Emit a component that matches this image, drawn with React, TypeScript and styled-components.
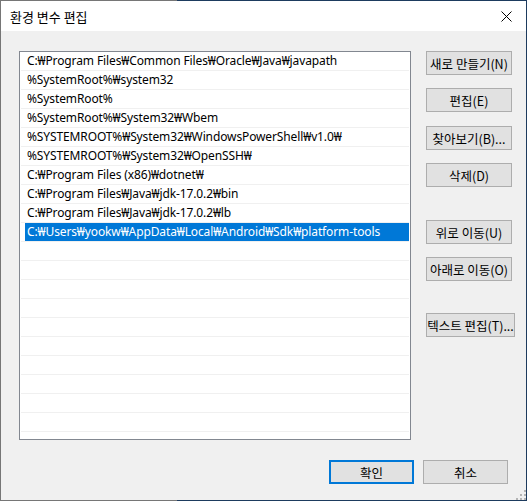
import styled, { createGlobalStyle } from 'styled-components';

const GlobalStyle = createGlobalStyle`
  html, body {
    margin: 0;
    padding: 0;
    background: #f0f0f0;
  }
  body {
    font-family: "Noto Sans CJK KR", sans-serif;
    font-size: 12px;
    color: #000;
  }
`;

const Frame = styled.div`
  position: relative;
  width: 527px;
  height: 501px;
  box-sizing: border-box;
  padding: 1px;
  background: linear-gradient(to right, #767676 177px, #1d3b5e 177px);
  display: flex;
  flex-direction: column;
`;

const TitleBar = styled.div`
  height: 30px;
  flex: none;
  background: #fff;
  display: flex;
  align-items: center;
  justify-content: space-between;
  padding: 0 14px 0 9px;
`;

const Title = styled.span`
  font-size: 13px;
  line-height: 1;
  margin-top: 1px;
`;

const Body = styled.div`
  position: relative;
  flex: 1;
  background: #f0f0f0;
  padding: 20px 0 0 18px;
  display: flex;
  flex-direction: column;
`;

const Main = styled.div`
  display: flex;
  gap: 15px;
  align-items: flex-start;
`;

const List = styled.div`
  width: 392px;
  height: 389px;
  box-sizing: border-box;
  border: 1px solid #828790;
  background: #fff;
  overflow: hidden;
`;

const Row = styled.div`
  height: 18px;
  margin: 0 1px;
  padding-left: 4px;
  border-bottom: 1px solid #f0f0f0;
  display: flex;
`;

const Item = styled.div<{ $selected?: boolean }>`
  flex: 1;
  padding-left: 2px;
  font-family: "Noto Sans", "Noto Sans CJK KR", sans-serif;
  font-size: 12px;
  letter-spacing: -0.12px;
  line-height: 18px;
  white-space: nowrap;
  background: ${(p) => (p.$selected ? '#0078d7' : 'transparent')};
  color: ${(p) => (p.$selected ? '#fff' : '#000')};
`;

const Side = styled.div`
  display: flex;
  flex-direction: column;
  align-items: flex-start;
`;

const Button = styled.button<{ $width?: number; $top?: number; $default?: boolean }>`
  width: ${(p) => p.$width ?? 86}px;
  height: 24px;
  margin-top: ${(p) => p.$top ?? 0}px;
  box-sizing: border-box;
  padding: 0;
  border: ${(p) => (p.$default ? '2px solid #0078d7' : '1px solid #adadad')};
  background: #e1e1e1;
  font-family: "Noto Sans CJK KR", sans-serif;
  font-size: 12.5px;
  color: #000;
  white-space: nowrap;
  display: flex;
  align-items: center;
  justify-content: center;
`;

const Footer = styled.div`
  display: flex;
  justify-content: flex-end;
  gap: 9px;
  margin-top: 20px;
  padding-right: 18px;
`;

const Grip = styled.svg`
  position: absolute;
  right: 0;
  bottom: 0;
`;

const paths = [
  'C:₩Program Files₩Common Files₩Oracle₩Java₩javapath',
  '%SystemRoot%₩system32',
  '%SystemRoot%',
  '%SystemRoot%₩System32₩Wbem',
  '%SYSTEMROOT%₩System32₩WindowsPowerShell₩v1.0₩',
  '%SYSTEMROOT%₩System32₩OpenSSH₩',
  'C:₩Program Files (x86)₩dotnet₩',
  'C:₩Program Files₩Java₩jdk-17.0.2₩bin',
  'C:₩Program Files₩Java₩jdk-17.0.2₩lb',
  'C:₩Users₩yookw₩AppData₩Local₩Android₩Sdk₩platform-tools',
];

const rows = [...paths, ...Array(10).fill('')];

export default function App() {
  return (
    <>
      <GlobalStyle />
      <Frame>
        <TitleBar>
          <Title>환경 변수 편집</Title>
          <svg width="11" height="11" viewBox="0 0 11 11">
            <path d="M0.5 0.5 L10.5 10.5 M10.5 0.5 L0.5 10.5" stroke="#000" strokeWidth="1" fill="none" />
          </svg>
        </TitleBar>
        <Body>
          <Main>
            <List>
              {rows.map((text, i) => (
                <Row key={i}>
                  <Item $selected={i === 9}>{text}</Item>
                </Row>
              ))}
            </List>
            <Side>
              <Button>새로 만들기(N)</Button>
              <Button $top={13}>편집(E)</Button>
              <Button $top={14}>찾아보기(B)...</Button>
              <Button $top={13}>삭제(D)</Button>
              <Button $top={33}>위로 이동(U)</Button>
              <Button $top={13}>아래로 이동(O)</Button>
              <Button $top={32} $width={89}>텍스트 편집(T)...</Button>
            </Side>
          </Main>
          <Footer>
            <Button $width={85} $default>확인</Button>
            <Button $width={85}>취소</Button>
          </Footer>
          <Grip width="10" height="10" viewBox="0 0 10 10">
            <g fill="#b4b4b4">
              <rect x="8" y="0" width="2" height="2" />
              <rect x="4" y="4" width="2" height="2" />
              <rect x="8" y="4" width="2" height="2" />
              <rect x="0" y="8" width="2" height="2" />
              <rect x="4" y="8" width="2" height="2" />
              <rect x="8" y="8" width="2" height="2" />
            </g>
          </Grip>
        </Body>
      </Frame>
    </>
  );
}
